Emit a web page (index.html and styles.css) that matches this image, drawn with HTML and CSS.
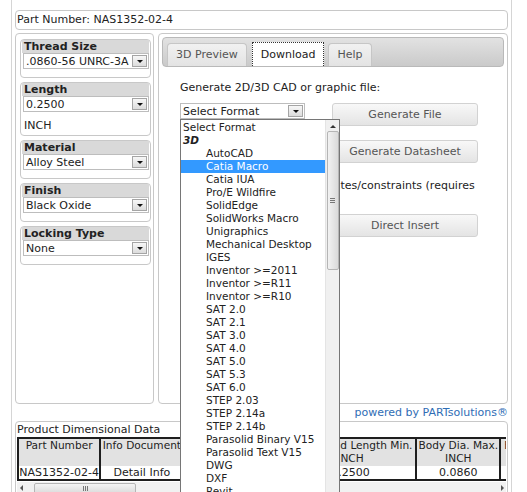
FILE: index.html
```html
<!DOCTYPE html>
<html>
<head>
    <meta charset="utf-8"/>
    <title>NAS1352-02-4</title>
    <link rel="stylesheet" href="styles.css">
</head>
<body>
<div class="page">
    <div class="part-bar">Part Number: NAS1352-02-4</div>
    <div class="main">
        <div class="attrs">
            <div class="group">
                <div class="group-title">Thread Size</div>
                <div class="pick"><span>.0860-56 UNRC-3A</span><b class="drop"></b></div>
            </div>
            <div class="group with-unit">
                <div class="group-title">Length</div>
                <div class="pick"><span>0.2500</span><b class="drop"></b></div>
                <div class="unit">INCH</div>
            </div>
            <div class="group">
                <div class="group-title">Material</div>
                <div class="pick"><span>Alloy Steel</span><b class="drop"></b></div>
            </div>
            <div class="group">
                <div class="group-title">Finish</div>
                <div class="pick"><span>Black Oxide</span><b class="drop"></b></div>
            </div>
            <div class="group">
                <div class="group-title">Locking Type</div>
                <div class="pick"><span>None</span><b class="drop"></b></div>
            </div>
        </div>
        <div class="viewer">
            <div class="tabs">
                <span class="tab">3D Preview</span>
                <span class="tab active">Download</span>
                <span class="tab">Help</span>
            </div>
            <div class="download">
                <p class="lead">Generate 2D/3D CAD or graphic file:</p>
                <div class="actions">
                    <div class="fmt">
                        <div class="pick"><span>Select Format</span><b class="drop"></b></div>
                        <div class="fmt-list">
                            <ul class="fmt-items">
                                <li>Select Format</li>
                                <li class="grp">3D</li>
                                <li class="ind">AutoCAD</li>
                                <li class="ind sel">Catia Macro</li>
                                <li class="ind">Catia IUA</li>
                                <li class="ind">Pro/E Wildfire</li>
                                <li class="ind">SolidEdge</li>
                                <li class="ind">SolidWorks Macro</li>
                                <li class="ind">Unigraphics</li>
                                <li class="ind">Mechanical Desktop</li>
                                <li class="ind">IGES</li>
                                <li class="ind">Inventor &gt;=2011</li>
                                <li class="ind">Inventor &gt;=R11</li>
                                <li class="ind">Inventor &gt;=R10</li>
                                <li class="ind">SAT 2.0</li>
                                <li class="ind">SAT 2.1</li>
                                <li class="ind">SAT 3.0</li>
                                <li class="ind">SAT 4.0</li>
                                <li class="ind">SAT 5.0</li>
                                <li class="ind">SAT 5.3</li>
                                <li class="ind">SAT 6.0</li>
                                <li class="ind">STEP 2.03</li>
                                <li class="ind">STEP 2.14a</li>
                                <li class="ind">STEP 2.14b</li>
                                <li class="ind">Parasolid Binary V15</li>
                                <li class="ind">Parasolid Text V15</li>
                                <li class="ind">DWG</li>
                                <li class="ind">DXF</li>
                                <li class="ind">Revit</li>
                            </ul>
                            <div class="vbar">
                                <span class="up"></span>
                                <span class="vthumb"><i></i></span>
                            </div>
                        </div>
                    </div>
                    <button class="btn">Generate File</button>
                    <button class="btn col2 gap-a">Generate Datasheet</button>
                    <label class="opt"><input type="checkbox"><span>Include attributes/constraints (requires plugin)</span></label>
                    <button class="btn col2 gap-b">Direct Insert</button>
                </div>
            </div>
        </div>
    </div>
    <div class="powered">powered by PARTsolutions®</div>
    <div class="dim">
        <div class="dim-title">Product Dimensional Data</div>
        <div class="table-wrap">
            <table>
                <tr>
                    <th class="w-part">Part Number</th>
                    <th class="w-info">Info Document</th>
                    <th class="w-size">Thread Size</th>
                    <th class="w-len">Full Thread Length Min.<br>INCH</th>
                    <th class="w-dia">Body Dia. Max.<br>INCH</th>
                    <th class="w-dia">Body Dia. Min.<br>INCH</th>
                    <th class="w-dia">Head Dia. Max.<br>INCH</th>
                </tr>
                <tr>
                    <td>NAS1352-02-4</td>
                    <td>Detail Info</td>
                    <td>2-56</td>
                    <td>0.2500</td>
                    <td>0.0860</td>
                    <td>0.0820</td>
                    <td>0.1400</td>
                </tr>
            </table>
        </div>
        <div class="hbar">
            <span class="left"></span>
            <span class="hthumb"><i></i></span>
            <span class="right"></span>
        </div>
    </div>
</div>
</body>
</html>
```

FILE: styles.css
```css
* {
    margin: 0;
    padding: 0;
    box-sizing: border-box;
}

li {
    list-style: none;
}

html, body {
    height: 100%;
    overflow: hidden;
}

body {
    font: 11px/13px "DejaVu Sans", Verdana, sans-serif;
    color: #222;
    background: #fff;
}

.page {
    width: 501px;
    height: 492px;
    margin-left: 11px;
    padding: 10px 3px 0;
    border-left: 1px solid #d5d5d5;
    border-right: 1px solid #d5d5d5;
}

.part-bar {
    height: 20px;
    line-height: 18px;
    padding-left: 1px;
    border: 1px solid #c8c8c8;
    border-radius: 4px;
}

.main {
    display: flex;
    gap: 4px;
    height: 371px;
    margin-top: 3px;
}

/* left attribute column */
.attrs {
    width: 139px;
    padding: 5px 2px 0 4px;
    border: 1px solid #c8c8c8;
    border-radius: 4px;
    display: flex;
    flex-direction: column;
    gap: 4px;
}

.group {
    padding: 0 1px 8px;
    border: 1px solid #c8c8c8;
    border-radius: 4px;
}

.group.with-unit {
    padding-bottom: 2px;
}

.group-title {
    padding-left: 2px;
    font-weight: bold;
    line-height: 13px;
    background: #d9d9d9;
}

.pick {
    display: flex;
    align-items: center;
    height: 16px;
    padding-left: 2px;
    background: #fff;
    border: 1px solid #bdbdbd;
}

.group .pick {
    margin-left: 1px;
}

.pick span {
    flex: 1;
    white-space: nowrap;
    overflow: hidden;
}

.drop {
    position: relative;
    width: 15px;
    height: 12px;
    margin-right: 1px;
    border: 1px solid #a5a5a5;
    background: linear-gradient(#f7f7f7, #dcdcdc);
}

.drop:after {
    content: "";
    position: absolute;
    left: 4px;
    top: 4px;
    border-top: 3px solid #111;
    border-left: 3px solid transparent;
    border-right: 3px solid transparent;
}

.unit {
    padding-left: 2px;
    margin-top: 7px;
    line-height: 14px;
}

/* right tab panel */
.viewer {
    flex: 1;
    padding: 3px;
    border: 1px solid #c8c8c8;
    border-radius: 4px;
}

.tabs {
    display: flex;
    align-items: flex-end;
    height: 30px;
    padding: 0 4px;
    border: 1px solid #b9b9b9;
    border-radius: 4px;
    background: linear-gradient(#e2e2e2, #cacaca);
}

.tab {
    height: 23px;
    line-height: 21px;
    padding: 0 8px;
    margin-right: 4px;
    color: #555;
    border: 1px solid #c6c6c6;
    border-bottom: 0;
    border-radius: 4px 4px 0 0;
    background: linear-gradient(#f1f1f1, #e3e3e3);
}

.tab.active {
    height: 24px;
    line-height: 23px;
    margin-left: 1px;
    color: #222;
    background: #fff;
    border: 1px dotted #333;
    border-bottom: 0;
    border-radius: 0;
}

.download {
    padding: 14px 0 0 18px;
}

.lead {
    line-height: 14px;
    margin-bottom: 8px;
}

.actions {
    display: grid;
    grid-template-columns: 125px 146px;
    column-gap: 27px;
    align-items: start;
}

.fmt {
    position: relative;
}

.btn {
    height: 23px;
    font: inherit;
    color: #555;
    border: 1px solid #d2d2d2;
    border-radius: 3px;
    background: linear-gradient(#f8f8f8, #e4e4e4);
}

.col2 {
    grid-column: 2;
}

.gap-a {
    margin-top: 14px;
}

.gap-b {
    margin-top: 9px;
}

.opt {
    grid-column: 1 / span 2;
    display: flex;
    align-items: flex-start;
    margin-top: 16px;
    padding-left: 60px;
    line-height: 13px;
}

.opt input {
    margin: 0 4px 0 3px;
    width: 13px;
    height: 13px;
}

/* open format dropdown */
.fmt-list {
    position: absolute;
    left: 0;
    top: 16px;
    z-index: 10;
    display: flex;
    width: 160px;
    height: 420px;
    background: #fff;
    border: 1px solid #767676;
}

.fmt-items {
    flex: 1;
    padding-top: 1px;
    font-size: 10.5px;
}

.fmt-items li {
    height: 13px;
    line-height: 13px;
    padding-left: 2px;
    white-space: nowrap;
}

.fmt-items li.grp {
    font-weight: bold;
    font-style: italic;
}

.fmt-items li.ind {
    padding-left: 25px;
}

.fmt-items li.sel {
    color: #fff;
    background: #3399ff;
}

.vbar {
    width: 14px;
    display: flex;
    flex-direction: column;
    align-items: center;
    background: #f0f0f0;
    border-left: 1px solid #e4e4e4;
}

.up {
    margin: 5px 0 3px;
    border-bottom: 3px solid #333;
    border-left: 3px solid transparent;
    border-right: 3px solid transparent;
}

.vthumb {
    display: flex;
    align-items: center;
    justify-content: center;
    width: 12px;
    height: 139px;
    border: 1px solid #b5b5b5;
    border-radius: 2px;
    background: linear-gradient(90deg, #f2f2f2, #dadada);
}

.vthumb i {
    width: 5px;
    height: 5px;
    border-top: 1px solid #777;
    border-bottom: 1px solid #777;
    background: linear-gradient(transparent 1px, #777 1px, #777 2px, transparent 2px);
}

.powered {
    height: 17px;
    line-height: 17px;
    text-align: right;
    color: #2f6db5;
}

/* dimensional data */
.dim {
    height: 80px;
    padding: 0 1px;
    border: 1px solid #c8c8c8;
    border-radius: 4px;
    overflow: hidden;
}

.dim-title {
    line-height: 15px;
}

.table-wrap {
    overflow: hidden;
}

table {
    width: 653px;
    table-layout: fixed;
    border-collapse: separate;
    border-spacing: 0;
    white-space: nowrap;
    border-left: 2px solid #1e1e1e;
    border-top: 2px solid #1e1e1e;
}

th, td {
    padding: 0;
    line-height: 13px;
    text-align: center;
    overflow: hidden;
    border-right: 2px solid #1e1e1e;
}

th {
    height: 27px;
    font-size: 10.6px;
    font-weight: normal;
    vertical-align: top;
    background: #e2e2e2;
}

td {
    height: 15px;
    vertical-align: top;
    border-bottom: 2px solid #1e1e1e;
}

.w-part {
    width: 82px;
}

.w-info {
    width: 83px;
}

.w-size {
    width: 101px;
}

.w-len {
    width: 131px;
}

.w-dia {
    width: 84px;
}

.hbar {
    display: flex;
    align-items: center;
    height: 12px;
    margin-top: 1px;
    background: #f1f1f1;
}

.left {
    margin-left: 3px;
    border-right: 3px solid #555;
    border-top: 3px solid transparent;
    border-bottom: 3px solid transparent;
}

.hthumb {
    display: flex;
    justify-content: center;
    align-items: center;
    width: 102px;
    height: 11px;
    margin-left: 11px;
    border: 1px solid #b5b5b5;
    border-radius: 2px;
    background: linear-gradient(#f4f4f4, #dcdcdc);
}

.hthumb i {
    width: 5px;
    height: 5px;
    border-left: 1px solid #777;
    border-right: 1px solid #777;
    background: linear-gradient(90deg, transparent 1px, #777 1px, #777 2px, transparent 2px);
}

.right {
    margin: 0 2px 0 auto;
    border-left: 3px solid #555;
    border-top: 3px solid transparent;
    border-bottom: 3px solid transparent;
}
```
